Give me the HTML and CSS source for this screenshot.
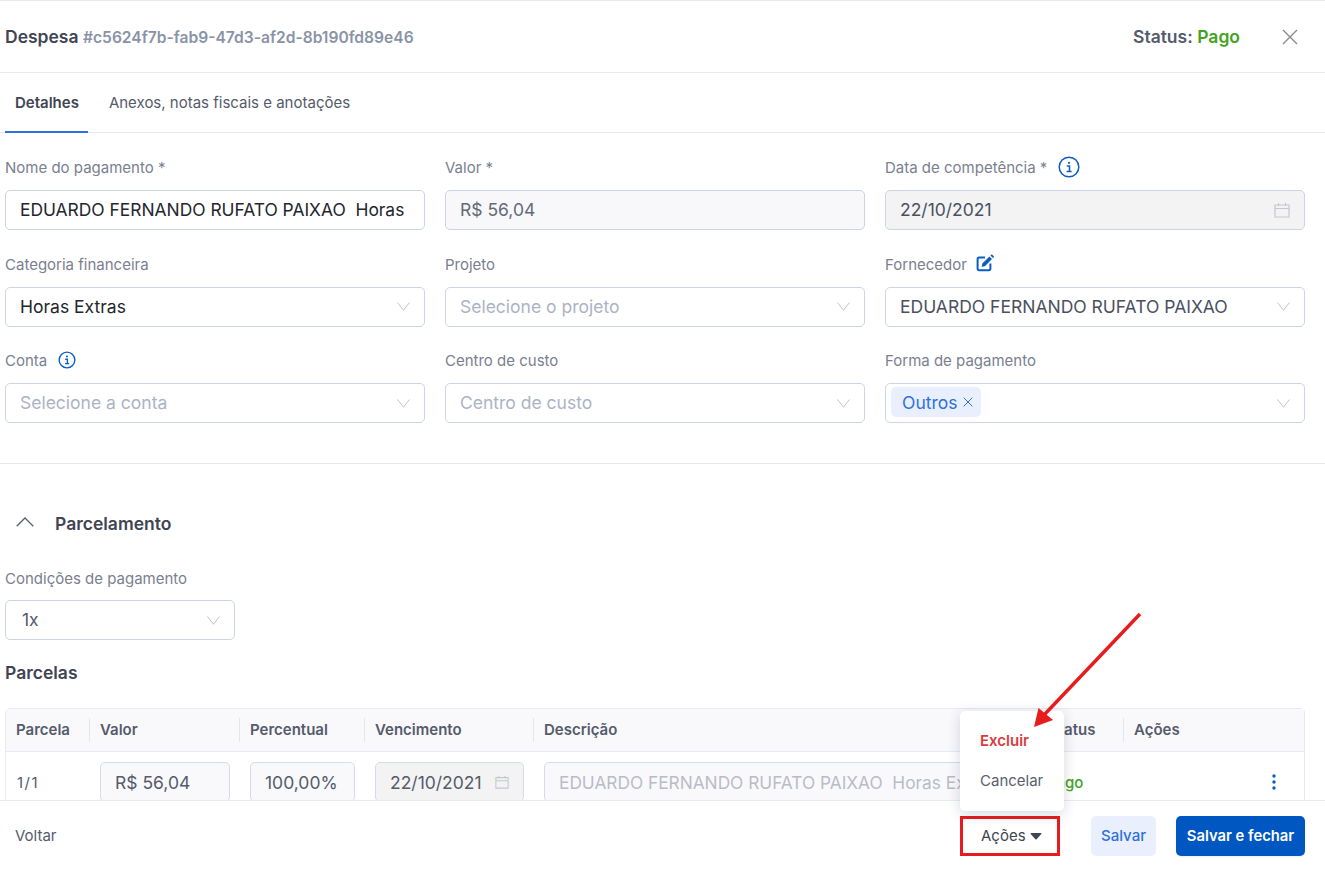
FILE: index.html
```html
<!DOCTYPE html>
<html lang="pt-BR">
<head>
<meta charset="utf-8">
<title>Despesa</title>
<link rel="stylesheet" href="styles.css">
</head>
<body>
<div class="page">
  <header class="head">
    <h1 class="title">Despesa <span class="title-id">#c5624f7b-fab9-47d3-af2d-8b190fd89e46</span></h1>
    <div class="status">Status: <span class="green">Pago</span></div>
    <svg class="close" width="18" height="18" viewBox="0 0 18 18"><path d="M2 2l14 14M16 2L2 16" stroke="#8a8a8a" stroke-width="1.4" fill="none"/></svg>
  </header>
  <nav class="tabs">
    <div class="tab active">Detalhes</div>
    <div class="tab">Anexos, notas fiscais e anotações</div>
  </nav>
  <main class="content">
    <section class="form-grid">
      <div class="field">
        <div class="label">Nome do pagamento *</div>
        <div class="control"><span class="val dark name-val">EDUARDO FERNANDO RUFATO PAIXAO  Horas Extras</span></div>
      </div>
      <div class="field">
        <div class="label">Valor *</div>
        <div class="control soft"><span class="val muted">R$ 56,04</span></div>
      </div>
      <div class="field">
        <div class="label"><span>Data de competência *</span>
          <svg class="info lg" viewBox="0 0 22 22"><circle cx="11" cy="11" r="9.8" fill="none" stroke="#0b5cc4" stroke-width="1.5"/><circle cx="11" cy="6.8" r="1.1" fill="#0b5cc4"/><path d="M8.8 10h2.700v5.200M8.600 15.400h5" fill="none" stroke="#0b5cc4" stroke-width="1.5"/></svg>
        </div>
        <div class="control grey"><span class="val body">22/10/2021</span>
          <svg class="cal" viewBox="0 0 16 16"><path d="M1 3h14v12H1zM1 6.500h14M4.500 1v3M11.500 1v3" fill="none" stroke="#c4c7cd" stroke-width="1.2"/></svg>
        </div>
      </div>

      <div class="field">
        <div class="label">Categoria financeira</div>
        <div class="control"><span class="val dark">Horas Extras</span>
          <svg class="chev" viewBox="0 0 13 9"><path d="M.5.5L6.500 8.300 12.500.5" fill="none" stroke="#bfc2c8" stroke-width="1"/></svg>
        </div>
      </div>
      <div class="field">
        <div class="label">Projeto</div>
        <div class="control"><span class="val ph">Selecione o projeto</span>
          <svg class="chev" viewBox="0 0 13 9"><path d="M.5.5L6.500 8.300 12.500.5" fill="none" stroke="#bfc2c8" stroke-width="1"/></svg>
        </div>
      </div>
      <div class="field">
        <div class="label"><span>Fornecedor</span>
          <svg class="edit" viewBox="0 0 18 18"><path d="M9 3.400H3.200c-1 0-1.600.6-1.600 1.600v9.600c0 1 .6 1.600 1.600 1.600h9.600c1 0 1.600-.6 1.600-1.600V9.400" fill="none" stroke="#0b5cc4" stroke-width="2"/><path d="M6.300 9.600L13.400 2.500l2.600 2.600-7.100 7.100-3.200.6zM14.400 1.500l.6-.6c.4-.4 1-.4 1.400 0l1.200 1.200c.4.4.4 1 0 1.400l-.6.6z" fill="#0b5cc4"/></svg>
        </div>
        <div class="control"><span class="val body">EDUARDO FERNANDO RUFATO PAIXAO</span>
          <svg class="chev" viewBox="0 0 13 9"><path d="M.5.5L6.500 8.300 12.500.5" fill="none" stroke="#bfc2c8" stroke-width="1"/></svg>
        </div>
      </div>

      <div class="field">
        <div class="label"><span>Conta</span>
          <svg class="info" viewBox="0 0 22 22"><circle cx="11" cy="11" r="9.600" fill="none" stroke="#0b5cc4" stroke-width="1.7"/><circle cx="11" cy="6.800" r="1.200" fill="#0b5cc4"/><path d="M8.800 10h2.700v5.200M8.600 15.400h5" fill="none" stroke="#0b5cc4" stroke-width="1.7"/></svg>
        </div>
        <div class="control"><span class="val ph">Selecione a conta</span>
          <svg class="chev" viewBox="0 0 13 9"><path d="M.5.5L6.500 8.300 12.500.5" fill="none" stroke="#bfc2c8" stroke-width="1"/></svg>
        </div>
      </div>
      <div class="field">
        <div class="label">Centro de custo</div>
        <div class="control"><span class="val ph">Centro de custo</span>
          <svg class="chev" viewBox="0 0 13 9"><path d="M.5.5L6.500 8.300 12.500.5" fill="none" stroke="#bfc2c8" stroke-width="1"/></svg>
        </div>
      </div>
      <div class="field">
        <div class="label">Forma de pagamento</div>
        <div class="control tagged">
          <span class="tag">Outros
            <svg class="tag-x" viewBox="0 0 10 10"><path d="M.7.7l8.600 8.600M9.300.7L.7 9.300" fill="none" stroke="#2f6fdf" stroke-width="1"/></svg>
          </span>
          <svg class="chev" viewBox="0 0 13 9"><path d="M.5.5L6.500 8.300 12.500.5" fill="none" stroke="#bfc2c8" stroke-width="1"/></svg>
        </div>
      </div>
    </section>

    <hr class="divider">

    <section class="installments">
      <div class="section-head">
        <svg class="up" viewBox="0 0 18 10"><path d="M.7 9.300L9 1l8.300 8.300" fill="none" stroke="#5a5f6b" stroke-width="1.3"/></svg>
        <h2 class="section-title">Parcelamento</h2>
      </div>
      <div class="field cond">
        <div class="label">Condições de pagamento</div>
        <div class="control"><span class="val one">1x</span>
          <svg class="chev" viewBox="0 0 13 9"><path d="M.5.5L6.500 8.300 12.500.5" fill="none" stroke="#bfc2c8" stroke-width="1"/></svg>
        </div>
      </div>
      <h3 class="sub-title">Parcelas</h3>
      <div class="table">
        <div class="tr th">
          <div class="td">Parcela</div>
          <div class="td sep">Valor</div>
          <div class="td sep">Percentual</div>
          <div class="td sep">Vencimento</div>
          <div class="td sep">Descrição</div>
          <div class="td">Status</div>
          <div class="td sep">Ações</div>
        </div>
        <div class="tr tb">
          <div class="td first">1/1</div>
          <div class="td"><div class="cell-input w130">R$ 56,04</div></div>
          <div class="td"><div class="cell-input w105">100,00%</div></div>
          <div class="td"><div class="cell-input w149 cell-grey"><span>22/10/2021</span><svg class="cal sm" viewBox="0 0 16 16"><path d="M1 3h14v12H1zM1 6.500h14M4.500 1v3M11.500 1v3" fill="none" stroke="#c4c7cd" stroke-width="1.2"/></svg></div></div>
          <div class="td"><div class="cell-input wdesc"><span class="cell-ph">EDUARDO FERNANDO RUFATO PAIXAO  Horas Extras</span></div></div>
          <div class="td green-cell"><span class="green">Pago</span></div>
          <div class="td kebab-cell"><svg class="kebab" viewBox="0 0 4 16"><circle cx="2" cy="2" r="1.7" fill="#0b5cc4"/><circle cx="2" cy="8" r="1.7" fill="#0b5cc4"/><circle cx="2" cy="14" r="1.7" fill="#0b5cc4"/></svg></div>
        </div>
      </div>
    </section>
  </main>
  <footer class="foot">
    <div class="back">Voltar</div>
    <div class="actions">
      <div class="acoes-wrap">
        <div class="menu">
          <div class="menu-item danger">Excluir</div>
          <div class="menu-item">Cancelar</div>
        </div>
        <button class="btn acoes">Ações <svg class="caret" viewBox="0 0 12 7"><path d="M.5.6c0-.3.2-.6.6-.6h9.800c.4 0 .6.3.6.6 0 .2-.1.3-.2.4L6.600 6.200c-.3.4-.9.4-1.200 0L.7 1C.6.9.5.8.5.6z" fill="#3f4553"/></svg></button>
      </div>
      <button class="btn save">Salvar</button>
      <button class="btn save-close">Salvar e fechar</button>
    </div>
  </footer>
  <svg class="arrow" width="130" height="130" viewBox="0 0 130 130"><path d="M118 2L22 103" stroke="#e81c1c" stroke-width="3.4" fill="none"/><path d="M12 115l4.500-19 14.500 12z" fill="#e81c1c"/></svg>
</div>
</body>
</html>
```
FILE: styles.css
```css
* { box-sizing: border-box; }
html, body { margin: 0; padding: 0; background: #fff; }
body { font-family: Inter, "Noto Sans", sans-serif; color: #4a5160; }

.page { position: relative; width: 1325px; height: 870px; display: flex; flex-direction: column; overflow: hidden; border-top: 1px solid #eee6f0; }

.head { height: 72px; flex: none; display: flex; align-items: center; padding: 0 26px 0 5px; border-bottom: 1px solid #e4e9f5; }
.title { margin: 2px 0 0; font-size: 17.5px; font-weight: 600; color: #3f4553; flex: 1; line-height: 20px; }
.title-id { font-size: 15.6px; color: #8a93a6; font-weight: 600; }
.status { font-size: 17.5px; font-weight: 600; color: #555b6b; margin-right: 41px; }
.green { color: #43a31f; }
.close { display: block; }

.tabs { height: 60px; flex: none; display: flex; padding-left: 5px; border-bottom: 1px solid #e4e9f5; }
.tab { font-size: 15px; line-height: 60px; padding: 0 10px; color: #555b6b; height: 60px; }
.tab + .tab { margin-left: 11px; }
.tab.active { font-weight: 600; color: #3f4553; border-bottom: 2px solid #2f6fdf; padding-right: 9px; }

.content { flex: 1; min-height: 0; overflow: hidden; padding: 0 20px 0 5px; }

.form-grid { display: grid; grid-template-columns: repeat(3, 420px); column-gap: 20px; row-gap: 23.5px; padding-top: 24px; }
.field { display: flex; flex-direction: column; }
.label { flex: none; height: 20px; margin: 1px 0 12px; font-size: 15px; line-height: 20px; color: #7a8090; display: flex; align-items: center; gap: 10px; }
.control { height: 40px; border: 1px solid #cdd4e6; border-radius: 5px; background: #fff; display: flex; align-items: center; padding: 0 14px; position: relative; overflow: hidden; }
.control.soft { background: #f8f8fa; }
.control.grey { background: #f3f3f4; }
.val { font-size: 17.5px; white-space: pre; flex: 1; overflow: hidden; padding-bottom: 1px; }
.name-val { font-size: 17.4px; }
.dark { color: #23262e; }
.muted { color: #646a79; }
.body { color: #4a5060; }
.ph { color: #abb3c6; }
.one { color: #555b6b; padding-left: 2px; }
.chev { width: 13px; height: 9px; flex: none; }
.cal { width: 16px; height: 16px; flex: none; }
.info { width: 18px; height: 18px; margin-left: 1px; margin-top: -2px; }
.info.lg { width: 22px; height: 22px; margin-left: 1px; margin-top: -2px; }
.edit { width: 18px; height: 18px; margin-top: -3px; margin-left: -1px; }

.control.tagged { padding: 0 14px 0 5px; justify-content: space-between; }
.tag { height: 30px; background: #e9effc; border-radius: 5px; color: #2f6fdf; font-size: 17.5px; display: flex; align-items: center; gap: 6px; padding: 0 8px 0 11px; margin-top: -2px; }
.tag-x { width: 10px; height: 10px; }

.divider { margin: 40px -20px 0 -5px; border: 0; border-top: 1px solid #e6e8ef; }

.section-head { display: flex; align-items: center; height: 24px; margin-top: 47px; padding-left: 11px; gap: 21px; }
.up { width: 18px; height: 10px; margin-top: -2px; }
.section-title { margin: 0; font-size: 17.5px; font-weight: 600; color: #3f4553; }

.cond { width: 230px; margin-top: 33px; }
.cond .label { margin-bottom: 11px; }
.sub-title { margin: 23px 0 0; font-size: 17.5px; font-weight: 600; line-height: 20px; color: #3f4553; }

.table { margin-top: 25px; width: 1300px; border: 1px solid #e4e9f5; border-bottom: 0; border-radius: 5px 5px 0 0; }
.tr { display: grid; grid-template-columns: 83px 150px 125px 169px 506px 84px 181px; }
.th { height: 43px; background: #f9f9fc; border-bottom: 1px solid #e8ebf3; align-items: center; font-size: 15px; font-weight: 600; color: #555b6b; }
.th .td { padding-left: 10px; height: 24px; line-height: 24px; }
.th .td.sep { border-left: 1px solid #e4e6ee; }
.tb { padding-top: 10px; }
.first { padding: 10px 0 0 11px; font-size: 15px; line-height: 22px; color: #555b6b; letter-spacing: 1.5px; }
.tb .td { min-width: 0; }
.tb .td:not(.first):not(.green-cell):not(.kebab-cell) { padding-left: 11px; }
.cell-input { height: 40px; border: 1px solid #d5dbea; border-radius: 5px; background: #f9f9fb; font-size: 17.5px; color: #555b6b; display: flex; align-items: center; justify-content: space-between; padding: 0 14px; white-space: nowrap; overflow: hidden; }
.w130 { width: 130px; }
.w105 { width: 105px; }
.w149 { width: 149px; }
.wdesc { width: 480px; }
.cell-grey { background: #f3f3f4; }
.cell-ph { color: #b9bcc6; white-space: pre; font-size: 17.3px; }
.sm { width: 14px; height: 14px; margin-left: 4px; }
.green-cell { padding: 9px 0 0 8px; font-size: 15px; font-weight: 500; line-height: 24px; }
.kebab-cell { display: flex; justify-content: flex-end; padding: 12px 28px 0 0; height: 40px; }
.kebab { width: 4px; height: 16px; }

.foot { height: 70px; flex: none; position: relative; background: #fff; border-top: 1px solid #e8ebf3; display: flex; align-items: center; justify-content: space-between; padding: 0 20px 0 15px; margin-top: -1px; }
.back { font-size: 15px; color: #555b6b; }
.actions { display: flex; align-items: center; }
.acoes-wrap { position: relative; margin-right: 31px; }
.menu { position: absolute; left: 0; bottom: 45px; width: 104px; height: 100px; background: #fff; border-radius: 5px; box-shadow: 0 3px 14px rgba(30, 40, 70, .18); padding-top: 10px; }
.menu-item { height: 40px; line-height: 40px; padding-left: 20px; font-size: 15px; color: #5a6070; }
.danger { color: #d93c3c; font-weight: 600; }
.btn { font-family: inherit; font-size: 15px; height: 40px; border-radius: 5px; border: 0; padding: 0; cursor: pointer; }
.acoes { width: 100px; background: #fff; border: 3px solid #e81c1c; border-radius: 0; color: #3f4553; display: flex; align-items: center; padding-left: 18px; gap: 4px; }
.caret { width: 12px; height: 7px; margin-top: 1px; }
.save { width: 65px; background: #e9effc; color: #2f6fdf; font-weight: 500; margin-right: 20px; }
.save-close { width: 129px; background: #0057c2; color: #fff; font-weight: 600; font-size: 14.8px; box-shadow: 0 1px 2px rgba(0, 0, 0, .08); }

.arrow { position: absolute; left: 1022px; top: 611px; }
```
